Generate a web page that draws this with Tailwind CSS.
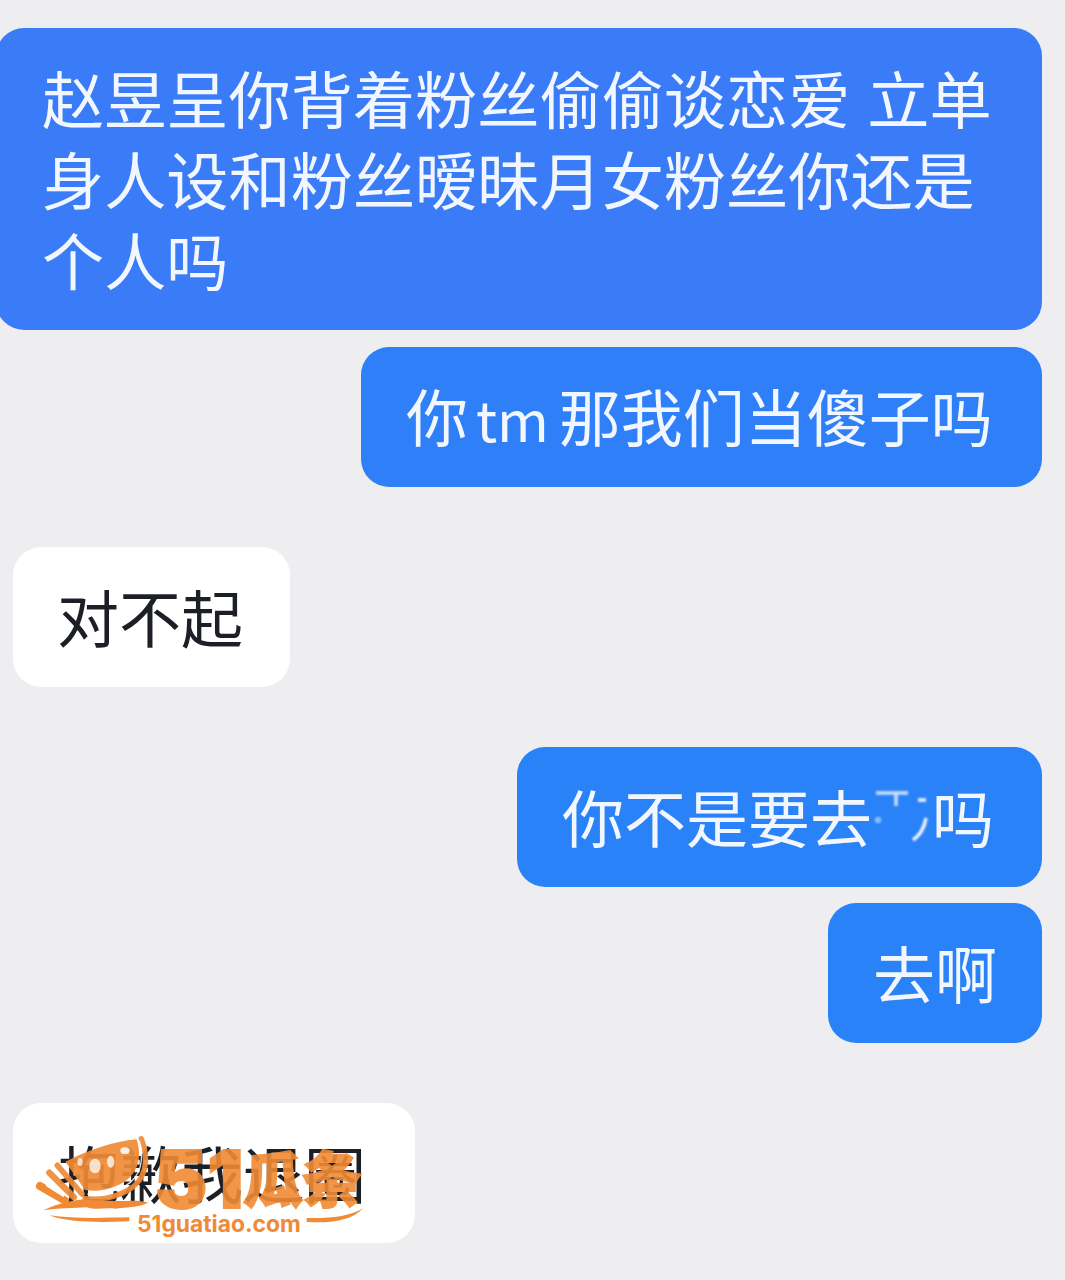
<!DOCTYPE html>
<html lang="zh-CN">
<head>
    <meta charset="UTF-8">
    <meta name="viewport" content="width=device-width, initial-scale=1.0">
    <title>聊天记录</title>
    <script src="https://cdn.jsdelivr.net/npm/@tailwindcss/browser@4"></script>
</head>
<body class="bg-[#eeeef0]">
    <div class="relative w-[1065px] h-[1280px] overflow-hidden pt-[28px] flex flex-col font-['Noto_Sans_CJK_SC','Noto_Sans',sans-serif] text-[62px] leading-[81px] font-normal">
        <!-- messages -->
        <div class="self-end mr-[23px] w-[1046px] h-[302px] rounded-[28px] bg-[#3a7cf8] text-[#f2f7ff] pl-[46px] pt-[29px] whitespace-nowrap">
            <p class="blur-[0.6px] text-[62.2px] [word-spacing:3px]">赵昱呈你背着粉丝偷偷谈恋爱 立单<br>身人设和粉丝暧昧月女粉丝你还是<br>个人吗</p>
        </div>
        <div class="self-end mr-[23px] mt-[17px] w-[681px] h-[140px] rounded-[28px] bg-[#2f80f8] text-[#f2f7ff] pl-[45px] flex items-center whitespace-nowrap">
            <p class="blur-[0.6px] -mt-[2px] [word-spacing:-6px]">你 <span class="text-[56px] mr-[10px]">tm</span>那我们当傻子吗</p>
        </div>
        <div class="self-start ml-[13px] mt-[60px] h-[140px] w-[277px] rounded-[28px] bg-white text-[#1c1f26] pl-[44px] flex items-center whitespace-nowrap">
            <p class="blur-[0.6px] -mt-[2px]">对不起</p>
        </div>
        <div class="self-end mr-[23px] mt-[60px] h-[140px] w-[525px] rounded-[28px] bg-[#2a82f8] text-[#f2f7ff] pl-[45px] flex items-center whitespace-nowrap">
            <p class="blur-[0.6px] -mt-[2px]">你不是要去</p>
            <!-- censored character -->
            <svg class="w-[62px] h-[62px] shrink-0 blur-[1px]" viewBox="0 0 62 62" fill="none" stroke="#f2f7ff" stroke-width="3.5">
                <path d="M4 7H36M24 7V20" opacity="0.8"/>
                <path d="M46 14H54M54 32C52 44 47 50 41 54"/>
                <circle cx="6" cy="34" r="1.5" opacity="0.5"/>
            </svg>
            <p class="blur-[0.6px] -mt-[2px] -ml-[2px]">吗</p>
        </div>
        <div class="self-end mr-[23px] mt-[16px] h-[140px] w-[214px] rounded-[28px] bg-[#2a82f8] text-[#f2f7ff] pl-[45px] flex items-center whitespace-nowrap">
            <p class="blur-[0.6px] -mt-[2px]">去啊</p>
        </div>
        <div class="self-start ml-[13px] mt-[60px] h-[140px] w-[402px] rounded-[28px] bg-white text-[#1c1f26] pl-[45px] flex items-center whitespace-nowrap">
            <p class="blur-[0.6px] -mt-[2px] tracking-[-0.5px]">抱歉我退圈</p>
        </div>

        <!-- watermark -->
        <div class="absolute left-0 top-[1090px] w-[430px] h-[170px] text-[#f08a35]">
            <svg class="absolute inset-0 w-full h-full" viewBox="0 0 1290 510" fill="none">
                <path d="M196 215C270 178 340 155 410 148C428 205 412 254 368 278C330 300 290 306 255 300Z" fill="#f08a35" fill-opacity="0.92"/>
                <path d="M424 146C450 210 436 270 388 298C340 326 300 330 255 326" stroke="#f08a35" stroke-width="16" stroke-linecap="round" stroke-opacity="0.92"/>
                <path d="M418 152C435 210 420 262 378 286C340 308 300 314 262 312" stroke="#fff" stroke-width="4" stroke-opacity="0.85"/>
                <ellipse cx="285" cy="228" rx="17" ry="22" fill="#fff" fill-opacity="0.75"/>
                <ellipse cx="332" cy="215" rx="11" ry="18" fill="#fff" fill-opacity="0.75"/>
                <ellipse cx="375" cy="182" rx="14" ry="10" fill="#fff" fill-opacity="0.85"/>
                <ellipse cx="240" cy="216" rx="8" ry="12" fill="#fff" fill-opacity="0.7"/>
                <path d="M120 288L195 332" stroke="#f08a35" stroke-width="24" stroke-linecap="round"/>
                <path d="M140 287L190 318" stroke="#fff" stroke-width="5" stroke-linecap="round"/>
                <path d="M148 248L222 322" stroke="#f08a35" stroke-width="19" stroke-linecap="round" stroke-opacity="0.92"/>
                <path d="M172 226L246 312" stroke="#f08a35" stroke-width="17" stroke-linecap="round" stroke-opacity="0.92"/>
                <path d="M130 361C175 340 225 328 262 328C285 336 310 330 345 333C380 334 410 328 445 338C410 354 380 350 345 356C315 352 290 362 260 352C225 354 175 354 130 361Z" fill="#f08a35"/>
                <path d="M148 376C215 386 300 384 388 382V394C300 398 200 398 148 376Z" fill="#f08a35"/>
                <path d="M920 384C985 386 1050 380 1090 354C1055 394 985 400 920 396Z" fill="#f08a35"/>
            </svg>
            <span class="absolute left-[154px] top-[49px] text-[80px] leading-[80px] font-black font-['Inter',sans-serif] opacity-90 [-webkit-text-stroke:2px_#f08a35]">51</span>
            <span class="absolute left-[243px] top-[50px] text-[60px] leading-[72px] font-black tracking-[-1px] whitespace-nowrap opacity-90 font-['Noto_Sans_CJK_SC',sans-serif] [-webkit-text-stroke:2px_#f08a35]">瓜条</span>
            <span class="absolute left-[137px] top-[122px] text-[22.8px] leading-[24px] font-bold whitespace-nowrap font-['Inter',sans-serif]">51guatiao.com</span>
        </div>
    </div>
</body>
</html>
